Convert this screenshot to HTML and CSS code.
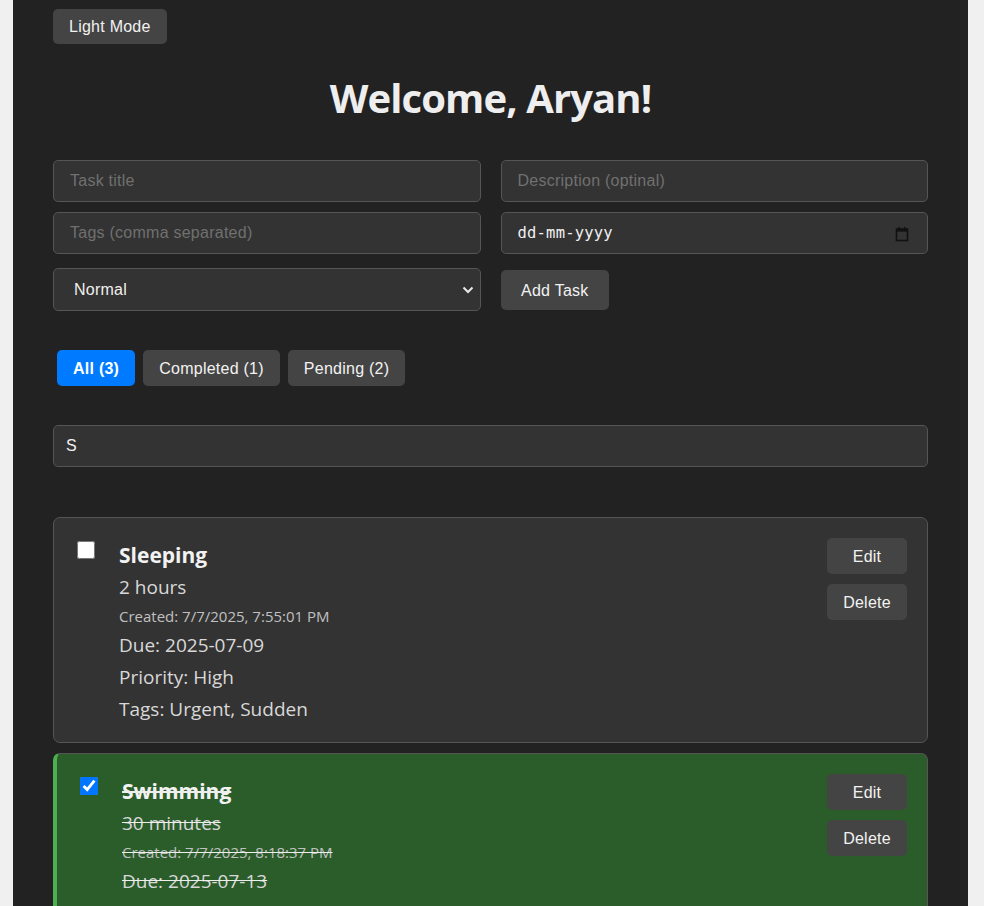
FILE: index.html
```html
<!DOCTYPE html>
<html lang="en">
<head>
<meta charset="utf-8">
<title>Task Manager</title>
<link rel="stylesheet" href="styles.css">
</head>
<body>
<div class="app">
  <button class="btn theme-btn">Light Mode</button>
  <h1 class="welcome">Welcome, Aryan!</h1>

  <form class="task-form">
    <input class="field" type="text" placeholder="Task title">
    <input class="field" type="text" placeholder="Description (optinal)">
    <input class="field" type="text" placeholder="Tags (comma separated)">
    <div class="field date-field">
      <span class="date-text">dd-mm-yyyy</span>
      <svg class="cal-icon" width="14" height="16" viewBox="0 0 14 16" aria-hidden="true">
        <rect x="1.5" y="3" width="11" height="11.5" fill="none" stroke="#111" stroke-width="1.6"/>
        <rect x="1.5" y="3" width="11" height="2.6" fill="#111"/>
        <rect x="3.4" y="1" width="1.6" height="3" fill="#111"/>
        <rect x="9" y="1" width="1.6" height="3" fill="#111"/>
      </svg>
    </div>
    <div class="select-wrap">
      <select class="field priority">
        <option>Normal</option>
        <option>High</option>
        <option>Low</option>
      </select>
      <svg class="chev" width="12" height="8" viewBox="0 0 12 8" aria-hidden="true">
        <path d="M1.5 1.5 L6 6 L10.5 1.5" fill="none" stroke="#e8e8e8" stroke-width="2"/>
      </svg>
    </div>
    <button type="button" class="btn add-btn">Add Task</button>
  </form>

  <div class="filters">
    <button class="btn filter active">All (3)</button>
    <button class="btn filter">Completed (1)</button>
    <button class="btn filter">Pending (2)</button>
  </div>

  <input class="field search" type="text" value="S">

  <ul class="task-list">
    <li class="task">
      <input class="task-check" type="checkbox">
      <div class="task-body">
        <div class="task-title">Sleeping</div>
        <p class="task-line">2 hours</p>
        <p class="task-created">Created: 7/7/2025, 7:55:01 PM</p>
        <p class="task-line due">Due: 2025-07-09</p>
        <p class="task-line">Priority: High</p>
        <p class="task-line">Tags: Urgent, Sudden</p>
      </div>
      <div class="task-actions">
        <button class="btn small">Edit</button>
        <button class="btn small">Delete</button>
      </div>
    </li>
    <li class="task done">
      <input class="task-check" type="checkbox" checked>
      <div class="task-body">
        <div class="task-title">Swimming</div>
        <p class="task-line">30 minutes</p>
        <p class="task-created">Created: 7/7/2025, 8:18:37 PM</p>
        <p class="task-line due">Due: 2025-07-13</p>
        <p class="task-line">Priority: Normal</p>
        <p class="task-line">Tags: Sport</p>
      </div>
      <div class="task-actions">
        <button class="btn small">Edit</button>
        <button class="btn small">Delete</button>
      </div>
    </li>
  </ul>
</div>
</body>
</html>
```

FILE: styles.css
```css
* { box-sizing: border-box; }

html, body {
  margin: 0;
  background: #f0f0f0;
}

.app {
  width: 955px;
  margin-left: 13px;
  min-height: 906px;
  background: #222222;
  padding: 9px 40px 40px;
  color: #eeeeee;
  font-family: "Open Sans", "Noto Sans", sans-serif;
}

.btn {
  font-family: "Liberation Sans", Arial, sans-serif;
  font-size: 16px;
  line-height: 19px;
  letter-spacing: 0.25px;
  color: #f2f2f2;
  background: #444444;
  border: none;
  border-radius: 5px;
  cursor: pointer;
}

.theme-btn {
  display: block;
  padding: 8px 16px;
}

.welcome {
  margin: 27px 0 35px;
  text-align: center;
  font-size: 40px;
  line-height: 54px;
  font-weight: 700;
  letter-spacing: -0.9px;
  color: #eeeeee;
}

.task-form {
  display: grid;
  grid-template-columns: 1fr 1fr;
  column-gap: 20px;
  row-gap: 10px;
  align-items: start;
  margin: 0;
}

.field {
  display: block;
  width: 100%;
  height: 42px;
  padding: 0 16px;
  background: #333333;
  border: 1px solid #555555;
  border-radius: 5px;
  color: #f0f0f0;
  font-family: "Liberation Sans", Arial, sans-serif;
  font-size: 16px;
  letter-spacing: 0.25px;
  outline: none;
}

.field::placeholder { color: #707070; }

.date-field {
  display: flex;
  align-items: center;
  justify-content: space-between;
  padding: 0 18px 0 16px;
}

.date-text {
  font-family: "DejaVu Sans Mono", monospace;
  font-size: 15.5px;
  color: #f0f0f0;
  letter-spacing: 0.2px;
}

.cal-icon { display: block; margin-top: 1px; }

.select-wrap {
  position: relative;
  margin-top: 4px;
}

.priority {
  height: 43px;
  padding: 0 20px;
  appearance: none;
  -webkit-appearance: none;
}

.chev {
  position: absolute;
  right: 7px;
  top: 18px;
}

.add-btn {
  justify-self: start;
  margin-top: 6px;
  padding: 10.5px 20.5px;
}

.filters {
  display: flex;
  gap: 8px;
  margin-top: 39px;
  padding-left: 4px;
}

.filter {
  padding: 8.5px 16px;
}

.filter.active {
  background: #007bff;
  color: #ffffff;
  font-weight: 700;
}

.search {
  margin-top: 39px;
  padding: 0 12px;
}

.task-list {
  list-style: none;
  margin: 50px 0 0;
  padding: 0;
  display: flex;
  flex-direction: column;
  gap: 10px;
}

.task {
  display: flex;
  align-items: flex-start;
  gap: 24px;
  padding: 20px;
  background: #333333;
  border: 1px solid #555555;
  border-radius: 7px;
}

.task.done {
  background: #2b5d2b;
  border-left: 4px solid #4caf50;
}

.task-check {
  width: 18px;
  height: 18px;
  margin: 3px 0 0 3px;
  flex: none;
}

.task-body {
  flex: 1;
  min-width: 0;
}

.task.done .task-body { text-decoration: line-through; }

.task-title {
  font-size: 21px;
  line-height: 34px;
  font-weight: 700;
  color: #f2f2f2;
  margin-bottom: 3px;
}

.task-line {
  margin: 7px 0 0;
  font-size: 19px;
  line-height: 25px;
  color: #d8d8d8;
}

.task-title + .task-line { margin-top: 0; }

.task-created {
  margin: 6px 0 0;
  font-size: 15px;
  line-height: 20px;
  color: #c0c0c0;
}

.task-actions {
  display: flex;
  flex-direction: column;
  gap: 10px;
  flex: none;
}

.small {
  width: 80px;
  padding: 8.5px 0;
  text-align: center;
}
```
